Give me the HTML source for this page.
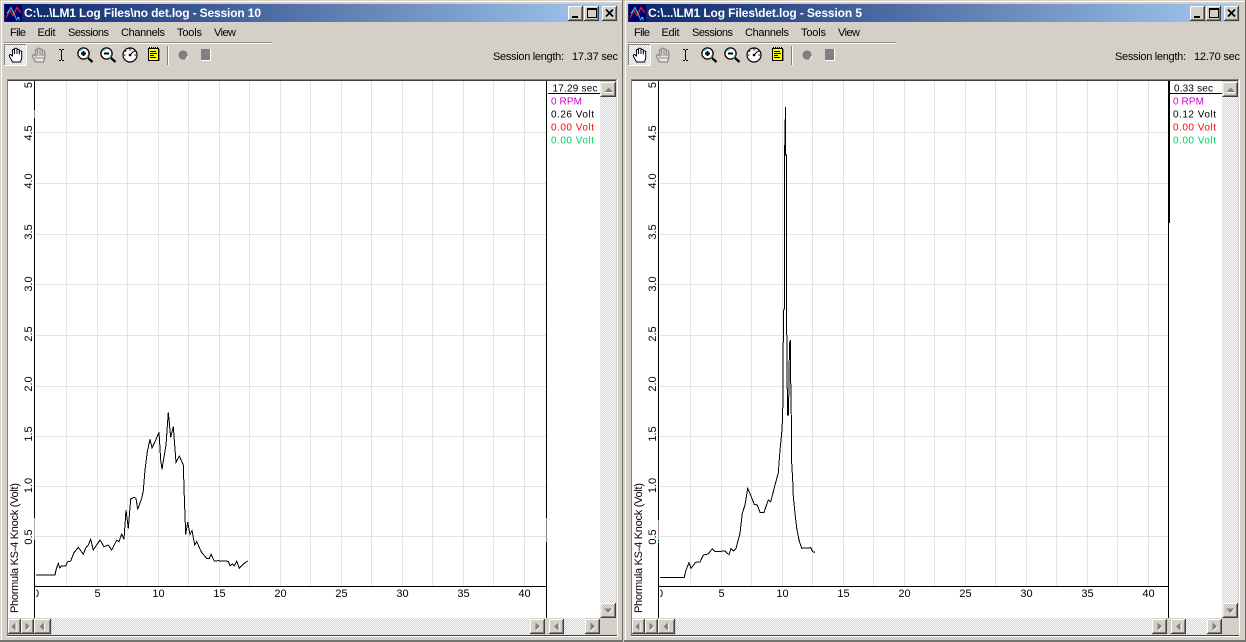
<!DOCTYPE html>
<html>
<head>
<meta charset="utf-8">
<title>LM1 Log Files</title>
<style>
html,body{margin:0;padding:0;background:#d4d0c8;width:1246px;height:642px;overflow:hidden}
svg{display:block;position:absolute;left:0;top:0}
text{font-family:"Liberation Sans",Arial,sans-serif;font-size:11px;fill:#000}
.t{font-weight:bold;font-size:12px;fill:#fff}
.l{font-size:10px}
.r{shape-rendering:crispEdges}
.g{stroke:#e4e4e4;stroke-width:1;fill:none;shape-rendering:crispEdges}
.c{stroke:#000;stroke-width:1;fill:none;stroke-linejoin:miter;shape-rendering:crispEdges}
</style>
</head>
<body>
<svg width="1246" height="642" viewBox="0 0 1246 642" xmlns="http://www.w3.org/2000/svg">
<defs>
<linearGradient id="tb" x1="0" x2="1" y1="0" y2="0"><stop offset="0" stop-color="#0a246a"/><stop offset="1" stop-color="#a6caf0"/></linearGradient>
<pattern id="dz" width="2" height="2" patternUnits="userSpaceOnUse"><rect width="2" height="2" fill="#d4d0c8"/><rect width="1" height="1" fill="#fff"/><rect x="1" y="1" width="1" height="1" fill="#fff"/></pattern>
<clipPath id="c1"><rect x="36" y="580" width="20" height="20"/></clipPath>
<clipPath id="c2"><rect x="660" y="580" width="20" height="20"/></clipPath>

<g id="sbtn" class="r"><rect width="15" height="15" fill="#404040"/><rect width="14" height="14" fill="#fff"/><rect x="1" y="1" width="13" height="13" fill="#808080"/><rect x="1" y="1" width="12" height="12" fill="#d4d0c8"/></g>
<g id="nbtn" class="r"><rect width="13" height="15" fill="#404040"/><rect width="12" height="14" fill="#fff"/><rect x="1" y="1" width="11" height="13" fill="#808080"/><rect x="1" y="1" width="10" height="12" fill="#d4d0c8"/></g>
<g id="wbtn" class="r"><rect width="17" height="15" fill="#404040"/><rect width="16" height="14" fill="#fff"/><rect x="1" y="1" width="15" height="13" fill="#808080"/><rect x="1" y="1" width="14" height="12" fill="#d4d0c8"/></g>

<g id="logo"><rect width="17" height="17" class="r" fill="#000070"/><path d="M1 13L5 6L8 11L12 3L16 8" fill="none" stroke="#ff2020" stroke-width="1.2"/><path d="M2 9L6 3L9 9L11 14M12 13h2v3M11 16l2-3" fill="none" stroke="#20e0e0" stroke-width="1"/></g>

<g id="caps">
<use href="#sbtn" x="0" y="1"/>
<rect class="r" x="4" y="11" width="6" height="2" fill="#000"/>
<use href="#sbtn" x="16" y="1"/>
<rect class="r" x="19.500" y="3.500" width="9" height="9" fill="none" stroke="#000"/><rect class="r" x="19" y="3" width="10" height="2" fill="#000"/>
<use href="#sbtn" x="34" y="1"/>
<path d="M38 4.500l7 7M45 4.500l-7 7" stroke="#000" stroke-width="1.700" fill="none"/>
</g>

<g id="tools">
<rect class="r" x="4" y="44" width="23" height="22" fill="url(#dz)"/>
<rect class="r" x="4" y="44" width="23" height="1" fill="#808080"/><rect class="r" x="4" y="44" width="1" height="22" fill="#808080"/>
<rect class="r" x="4" y="65" width="23" height="1" fill="#fff"/><rect class="r" x="26" y="44" width="1" height="22" fill="#fff"/>
<path d="M12.500 62L9.500 56.500Q9 54.500 10.500 54.500L12.500 56V50Q13.500 48.500 14.500 50V54V48.800Q16 47.500 17 48.800V54V49.800Q18.300 48.500 19.300 50V54.500V51.500Q20.500 50.300 21.700 51.500V58L20.500 62Z" fill="#fff" stroke="#000" stroke-width="1"/>
<g transform="translate(23 0)"><path d="M12.500 62L9.500 56.500Q9 54.500 10.500 54.500L12.500 56V50Q13.500 48.500 14.500 50V54V48.800Q16 47.500 17 48.800V54V49.800Q18.300 48.500 19.300 50V54.500V51.500Q20.500 50.300 21.700 51.500V58L20.500 62Z" fill="#e8e6e0" stroke="#8e8c86" stroke-width="1.300"/><path d="M12 55h9M12 58h9" stroke="#8e8c86" fill="none"/></g>
<path class="r" d="M59 49.500h2M62 49.500h2M61.500 50v10M59 60.500h2M62 60.500h2" stroke="#000" fill="none"/>
<circle cx="83.500" cy="53.500" r="5.600" fill="#fff" stroke="#000" stroke-width="1.300"/>
<path d="M80 51a5 5 0 0 1 3-2M88 55a5 5 0 0 1-2 3" stroke="#30d0e0" stroke-width="1.300" fill="none"/>
<path class="r" d="M81 52.500h5v2h-5zM82.500 51h2v5h-2z" fill="#000"/>
<path d="M88 58L92.500 62" stroke="#000" stroke-width="2.200"/>
<circle cx="106.500" cy="53.500" r="5.600" fill="#fff" stroke="#000" stroke-width="1.300"/>
<path d="M103 51a5 5 0 0 1 3-2M111 55a5 5 0 0 1-2 3" stroke="#30d0e0" stroke-width="1.300" fill="none"/>
<path class="r" d="M104 52.500h5v2h-5z" fill="#000"/>
<path d="M111 58L115.500 62" stroke="#000" stroke-width="2.200"/>
<circle cx="130" cy="55" r="7" fill="#fff" stroke="#000" stroke-width="1.200"/>
<path d="M130 55l3.500-3.500M125 50.500l1.300 1.300M130 48.500v2M135 50.500l-1.300 1.300M124 55h1.500M134.500 55H136" stroke="#000" fill="none"/>
<circle cx="130" cy="55" r="1.300" fill="#000"/>
<rect class="r" x="148.500" y="48.500" width="10" height="12" fill="#ffff00" stroke="#000"/>
<rect class="r" x="159" y="49" width="1" height="12" fill="#808080"/>
<path class="r" d="M149.500 47v2M151.500 47v2M153.500 47v2M155.500 47v2M157.500 47v2M150 51.500h6M150 53.500h7M150 55.500h4M150 57.500h6" stroke="#000" stroke-width="1" fill="none"/>
<rect class="r" x="167" y="46" width="1" height="19" fill="#808080"/><rect class="r" x="168" y="46" width="1" height="19" fill="#fff"/>
<circle cx="183" cy="55" r="4.600" fill="#808080"/>
<path d="M186 59a5 5 0 0 0 1.500-3" stroke="#fff" fill="none"/>
<rect class="r" x="201" y="49" width="9" height="11" fill="#808080"/>
<rect class="r" x="201" y="60" width="10" height="1" fill="#fff"/><rect class="r" x="210" y="49" width="1" height="12" fill="#fff"/>
</g>

<path id="vgrid" class="g" d="M66.500 81V586M97.500 81V586M127.500 81V586M158.500 81V586M188.500 81V586M219.500 81V586M249.500 81V586M280.500 81V586M310.500 81V586M341.500 81V586M371.500 81V586M402.500 81V586M432.500 81V586M463.500 81V586M493.500 81V586M524.500 81V586"/>
<g id="up"><use href="#sbtn"/><path d="M4 10h8L8 5.500z" fill="#808080"/><path d="M4 10.500h8" stroke="#fff" fill="none"/></g>
<g id="dn"><use href="#sbtn"/><path d="M3.500 5.500h8L7.500 10z" fill="#808080"/><path d="M8 10.500l4-5" stroke="#fff" fill="none"/></g>
<g id="blf"><use href="#nbtn"/><path d="M7.500 3.500V11.500L3.500 7.500z" fill="#808080"/><path d="M8 4v8" stroke="#fff" fill="none"/></g>
<g id="brt"><use href="#nbtn"/><path d="M4.500 3.500V11.500L8.500 7.500z" fill="#808080"/><path d="M5 12l4-4.500" stroke="#fff" fill="none"/></g>
<g id="wlf"><use href="#wbtn"/><path d="M10 3.500V11.500L5.500 7.500z" fill="#808080"/><path d="M10.500 4v8" stroke="#fff" fill="none"/></g>
<g id="lf"><use href="#sbtn"/><path d="M9.500 3.500V11.500L5 7.500z" fill="#808080"/><path d="M10 4v8" stroke="#fff" fill="none"/></g>
<g id="rt"><use href="#sbtn"/><path d="M5.500 3.500V11.500L10 7.500z" fill="#808080"/><path d="M6 12l4.500-4.500" stroke="#fff" fill="none"/></g>
</defs>

<rect class="r" width="1246" height="642" fill="#d4d0c8"/>
<!-- WINDOW 1 -->
<rect class="r" x="1" y="1" width="621" height="1" fill="#fff"/><rect class="r" x="1" y="1" width="1" height="639" fill="#fff"/>
<rect class="r" x="622" y="0" width="1" height="642" fill="#6b6a66"/>
<rect class="r" x="0" y="640" width="623" height="2" fill="#77756f"/>
<rect class="r" x="4" y="4" width="614" height="18" fill="url(#tb)"/>
<use href="#logo" x="5" y="4.500"/>
<text class="t" x="24" y="17" textLength="237" lengthAdjust="spacing">C:\...\LM1 Log Files\no det.log - Session 10</text>
<use href="#caps" x="568" y="5"/>
<text x="10" y="36" textLength="16">File</text><text x="37.500" y="36" textLength="18">Edit</text><text x="68" y="36" textLength="41">Sessions</text><text x="121" y="36" textLength="44">Channels</text><text x="177" y="36" textLength="25">Tools</text><text x="214" y="36" textLength="22">View</text>
<rect class="r" x="4" y="42" width="268" height="1" fill="#8f8d87"/><rect class="r" x="4" y="43" width="268" height="1" fill="#fff"/>
<use href="#tools"/>
<text x="493" y="60" textLength="71">Session length:</text><text x="572" y="60" textLength="46">17.37 sec</text>

<rect class="r" x="7" y="79" width="610" height="1" fill="#808080"/><rect class="r" x="7" y="80" width="609" height="1" fill="#404040"/>
<rect class="r" x="7" y="79" width="1" height="557" fill="#808080"/>
<rect class="r" x="8" y="81" width="592" height="537" fill="#fff"/>
<use href="#vgrid"/>
<path class="g" d="M36 132.500H547M36 183.500H547M36 234.500H547M36 284.500H547M36 335.500H547M36 386.500H547M36 436.500H547M36 486.500H547M36 536.500H547"/>
<rect class="r" x="548" y="81" width="52" height="537" fill="#fff"/>
<rect class="r" x="34" y="81" width="1" height="537" fill="#000"/>
<rect class="r" x="34" y="110" width="1" height="8" fill="#888"/><rect class="r" x="34" y="518" width="1" height="22" fill="#aaa"/>
<rect class="r" x="546" y="81" width="1" height="537" fill="#000"/>
<rect class="r" x="546" y="518" width="1" height="24" fill="#888"/>
<rect class="r" x="35" y="586" width="512" height="1" fill="#000"/>
<rect class="r" x="548" y="93" width="52" height="1" fill="#000"/>
<g text-anchor="middle">
<text transform="translate(32 85) rotate(-90)">5</text><text transform="translate(32 133) rotate(-90)">4.5</text><text transform="translate(32 181) rotate(-90)">4.0</text><text transform="translate(32 232) rotate(-90)">3.5</text><text transform="translate(32 284) rotate(-90)">3.0</text><text transform="translate(32 334) rotate(-90)">2.5</text><text transform="translate(32 384) rotate(-90)">2.0</text><text transform="translate(32 434) rotate(-90)">1.5</text><text transform="translate(32 485.500) rotate(-90)">1.0</text><text transform="translate(32 537) rotate(-90)">0.5</text>
<text x="36" y="597" clip-path="url(#c1)">0</text><text x="97.500" y="597">5</text><text x="158.500" y="597">10</text><text x="219.500" y="597">15</text><text x="280.500" y="597">20</text><text x="341.500" y="597">25</text><text x="402.500" y="597">30</text><text x="463.500" y="597">35</text><text x="524.500" y="597">40</text>
</g>
<text transform="translate(18 613) rotate(-90)" textLength="130">Phormula KS-4 Knock (Volt)</text>
<polyline class="c" points="36,575 55,575 56,570 58.300,563.300 59.700,568 61.700,566 65.700,566 67.300,562 70.700,561 74,552.700 78.300,547.300 83.300,554.300 86,547.300 88.300,545 90.700,539.300 93.300,550 100,540 104,546.700 108.300,545 111.700,550 116.700,540 119,541.700 121.700,534 124,539.300 126,510 128.300,528.300 130.700,499 134,497.300 136,498.300 137.700,509.300 141.700,498.300 143.300,490.700 145,470 147.300,451.700 150,439.300 152,447.700 155,441.700 159,432.300 160.700,460 162,469.300 166,445 168.300,412.300 170.700,437.300 173.300,426.700 176,462.300 179.300,456 183.300,465 184.300,496.700 185.700,534.300 187.700,522.300 190,534.300 192,530.700 194.700,545 196.700,541.700 201.700,552.700 206.700,558.300 209.300,558.300 211,554.300 214.300,561 218.300,560.700 228.300,561.300 230,565.700 232.300,564 234.300,565.700 236.700,561.300 239.300,568.300 244.300,563.300 247.700,561"/>
<text class="l" x="552.500" y="91.500" textLength="45">17.29 sec</text>
<text class="l" x="551" y="104.500" textLength="31" style="fill:#cc00cc">0 RPM</text>
<text class="l" x="551" y="117.500" textLength="43">0.26 Volt</text>
<text class="l" x="551" y="130.500" textLength="43" style="fill:#ff0000">0.00 Volt</text>
<text class="l" x="551" y="143.500" textLength="43" style="fill:#00cc66">0.00 Volt</text>
<rect class="r" x="600" y="97" width="16" height="506" fill="url(#dz)"/>
<use href="#up" transform="translate(600.500 82) scale(1.03 1)"/>
<use href="#dn" transform="translate(600.500 603) scale(1.03 1)"/>
<rect class="r" x="52" y="618" width="478" height="17" fill="url(#dz)"/>
<rect class="r" x="563" y="618" width="22" height="17" fill="url(#dz)"/>
<g transform="translate(0 619)"><use href="#blf" x="8"/><use href="#brt" x="21"/><use href="#wlf" x="34"/><use href="#rt" x="530"/><use href="#lf" x="549"/><use href="#rt" x="585"/></g>
<rect class="r" x="7" y="635" width="610" height="1" fill="#404040"/>
<rect class="r" x="7" y="636" width="611" height="1" fill="#fff"/><rect class="r" x="617" y="79" width="1" height="558" fill="#fff"/>

<!-- WINDOW 2 -->
<rect class="r" x="625" y="1" width="620" height="1" fill="#fff"/><rect class="r" x="625" y="1" width="1" height="639" fill="#fff"/>
<rect class="r" x="1245" y="0" width="1" height="642" fill="#6b6a66"/>
<rect class="r" x="624" y="640" width="622" height="2" fill="#77756f"/>
<rect class="r" x="628" y="4" width="612" height="18" fill="url(#tb)"/>
<use href="#logo" x="629" y="4.500"/>
<text class="t" x="648" y="17" textLength="214" lengthAdjust="spacing">C:\...\LM1 Log Files\det.log - Session 5</text>
<use href="#caps" x="1190" y="5"/>
<text x="634" y="36" textLength="16">File</text><text x="661.500" y="36" textLength="18">Edit</text><text x="692" y="36" textLength="41">Sessions</text><text x="745" y="36" textLength="44">Channels</text><text x="801" y="36" textLength="25">Tools</text><text x="838" y="36" textLength="22">View</text>
<rect class="r" x="628" y="42" width="268" height="1" fill="#8f8d87"/><rect class="r" x="628" y="43" width="268" height="1" fill="#fff"/>
<use href="#tools" x="624"/>
<text x="1115" y="60" textLength="71">Session length:</text><text x="1194" y="60" textLength="46">12.70 sec</text>

<rect class="r" x="631" y="79" width="608" height="1" fill="#808080"/><rect class="r" x="631" y="80" width="607" height="1" fill="#404040"/>
<rect class="r" x="631" y="79" width="1" height="557" fill="#808080"/>
<rect class="r" x="632" y="81" width="590" height="537" fill="#fff"/>
<use href="#vgrid" x="624"/>
<path class="g" d="M660 132.500H1169M660 183.500H1169M660 234.500H1169M660 284.500H1169M660 335.500H1169M660 386.500H1169M660 436.500H1169M660 486.500H1169M660 536.500H1169"/>
<rect class="r" x="1170" y="81" width="52" height="537" fill="#fff"/>
<rect class="r" x="658" y="81" width="1" height="537" fill="#000"/>
<rect class="r" x="658" y="520" width="1" height="20" fill="#999"/><rect class="r" x="658" y="541" width="1" height="2" fill="#20a0e0"/>
<rect class="r" x="1168" y="81" width="1" height="537" fill="#000"/>
<rect class="r" x="1169" y="81" width="1" height="142" fill="#000"/>
<rect class="r" x="659" y="586" width="510" height="1" fill="#000"/>
<rect class="r" x="1170" y="93" width="52" height="1" fill="#000"/>
<g text-anchor="middle">
<text transform="translate(656 85) rotate(-90)">5</text><text transform="translate(656 133) rotate(-90)">4.5</text><text transform="translate(656 181) rotate(-90)">4.0</text><text transform="translate(656 232) rotate(-90)">3.5</text><text transform="translate(656 284) rotate(-90)">3.0</text><text transform="translate(656 334) rotate(-90)">2.5</text><text transform="translate(656 384) rotate(-90)">2.0</text><text transform="translate(656 434) rotate(-90)">1.5</text><text transform="translate(656 485.500) rotate(-90)">1.0</text><text transform="translate(656 537) rotate(-90)">0.5</text>
<text x="660" y="597" clip-path="url(#c2)">0</text><text x="721.500" y="597">5</text><text x="782.500" y="597">10</text><text x="843.500" y="597">15</text><text x="904.500" y="597">20</text><text x="965.500" y="597">25</text><text x="1026.500" y="597">30</text><text x="1087.500" y="597">35</text><text x="1148.500" y="597">40</text>
</g>
<text transform="translate(642 613) rotate(-90)" textLength="130">Phormula KS-4 Knock (Volt)</text>
<polyline class="c" points="660,577.300 684.300,577.300 685.700,571 689,562.700 691,568.300 695.700,562.300 700,562 703.300,555 708.300,554 712.300,548.700 715,551.700 725,551 729,554.700 731,548.700 733.300,551 736,548.300 740,533.300 742.300,513.300 745,505 747.700,488.300 751,496 754.300,504.300 757.300,505 760,512.300 764,512.300 768.300,500 770.700,501.700 775,485 778.300,473 780,450 781.700,433 782.700,416 783.500,311 784.500,308 784.500,158 785.500,107 785.500,155 786.500,155 786.500,308 787.500,415 788.500,415 789.500,343 790.500,340 790.500,380 791,386.700 791.700,463 792.700,480 793.300,496.700 795,513.300 796.700,528 799,540 801.700,548.300 810.700,547.700 812.700,551.700 815,552.300"/>
<text class="l" x="1174" y="91.500" textLength="39">0.33 sec</text>
<text class="l" x="1173" y="104.500" textLength="31" style="fill:#cc00cc">0 RPM</text>
<text class="l" x="1173" y="117.500" textLength="43">0.12 Volt</text>
<text class="l" x="1173" y="130.500" textLength="43" style="fill:#ff0000">0.00 Volt</text>
<text class="l" x="1173" y="143.500" textLength="43" style="fill:#00cc66">0.00 Volt</text>
<rect class="r" x="1222" y="97" width="16" height="506" fill="url(#dz)"/>
<use href="#up" transform="translate(1222.500 82) scale(1.03 1)"/>
<use href="#dn" transform="translate(1222.500 603) scale(1.03 1)"/>
<rect class="r" x="676" y="618" width="476" height="17" fill="url(#dz)"/>
<rect class="r" x="1185" y="618" width="22" height="17" fill="url(#dz)"/>
<g transform="translate(0 619)"><use href="#blf" x="632"/><use href="#brt" x="645"/><use href="#wlf" x="658"/><use href="#rt" x="1152"/><use href="#lf" x="1171"/><use href="#rt" x="1207"/></g>
<rect class="r" x="631" y="635" width="608" height="1" fill="#404040"/>
<rect class="r" x="631" y="636" width="609" height="1" fill="#fff"/><rect class="r" x="1239" y="79" width="1" height="558" fill="#fff"/>
</svg>
</body>
</html>
